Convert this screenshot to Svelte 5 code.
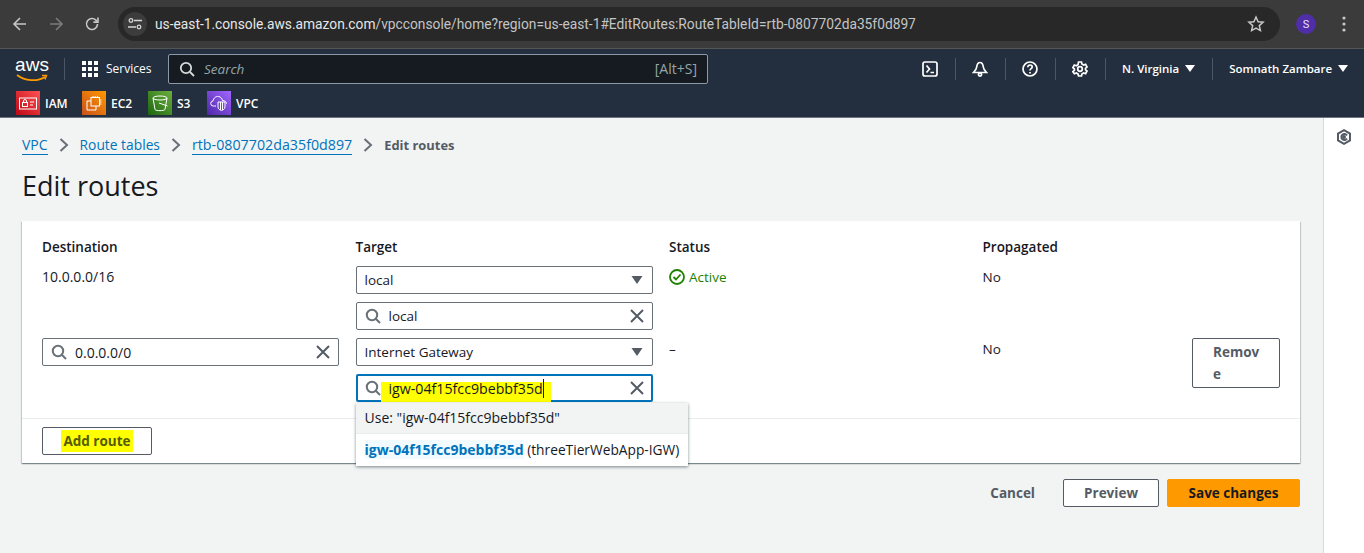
<script lang="ts">
    const favorites = [
        { name: "IAM", color: "iam" },
        { name: "EC2", color: "ec2" },
        { name: "S3", color: "s3" },
        { name: "VPC", color: "vpc" },
    ];
</script>

{#snippet searchIcon()}
    <svg class="ico" width="16" height="16" viewBox="0 0 16 16" fill="none" stroke="#687078" stroke-width="2">
        <circle cx="7" cy="7" r="5.2" />
        <path d="M11 11l4 4" />
    </svg>
{/snippet}

{#snippet clearIcon()}
    <svg class="clear" width="16" height="16" viewBox="0 0 16 16" fill="none" stroke="#545b64" stroke-width="2">
        <path d="M2 2l12 12M14 2L2 14" />
    </svg>
{/snippet}

{#snippet caret()}
    <svg class="caret" width="12" height="8" viewBox="0 0 12 8"><path d="M0.5 0h11L6 8z" fill="#545b64" /></svg>
{/snippet}

{#snippet crumbSep()}
    <svg width="10" height="16" viewBox="0 0 10 16" fill="none" stroke="#687078" stroke-width="2"><path d="M1.5 2l6.5 6-6.5 6" /></svg>
{/snippet}

<div class="browser">
    <div class="browser-nav">
        <svg width="16" height="16" viewBox="0 0 16 16" fill="none" stroke="#c7c7c7" stroke-width="1.6"><path d="M14 8H2.5M8 2L2 8l6 6" /></svg>
        <svg width="16" height="16" viewBox="0 0 16 16" fill="none" stroke="#7c7c7c" stroke-width="1.6"><path d="M2 8h11.5M8 2l6 6-6 6" /></svg>
        <svg width="16" height="16" viewBox="0 0 16 16" fill="none" stroke="#c7c7c7" stroke-width="1.6"><path d="M13.5 8a5.5 5.5 0 1 1-1.6-3.9L13.5 5.7" /><path d="M14 1.5v4.6H9.4" /></svg>
    </div>
    <div class="omnibox">
        <span class="tune">
            <svg width="14" height="12" viewBox="0 0 14 12" fill="none" stroke="#d5d5d5" stroke-width="1.3"><circle cx="3" cy="2.5" r="1.8" /><path d="M6 2.5h8M0 9h8" /><circle cx="11" cy="9" r="1.8" /></svg>
        </span>
        <span class="url">us-east-1.console.aws.amazon.com<span class="url-dim">/vpcconsole/home?region=us-east-1#EditRoutes:RouteTableId=rtb-0807702da35f0d897</span></span>
        <svg class="star" width="18" height="18" viewBox="0 0 18 18" fill="none" stroke="#c7c7c7" stroke-width="1.5"><path d="M9 2l2.1 4.7 5 .5-3.8 3.4 1.1 5L9 13l-4.4 2.6 1.1-5L1.9 7.2l5-.5z" /></svg>
    </div>
    <span class="avatar">S</span>
    <svg class="dots" width="4" height="16" viewBox="0 0 4 16" fill="#c7c7c7"><circle cx="2" cy="2" r="1.6" /><circle cx="2" cy="8" r="1.6" /><circle cx="2" cy="14" r="1.6" /></svg>
</div>

<header class="topnav">
    <div class="nav-main">
        <div class="logo">
            <span class="logo-text">aws</span>
            <svg width="32" height="8" viewBox="0 0 32 8" fill="none"><path d="M1 1c8 6 20 7 28 2" stroke="#ff9900" stroke-width="1.8" /><path d="M26 1.5l4.5 0-1.5 4" stroke="#ff9900" stroke-width="1.4" /></svg>
        </div>
        <span class="nav-div first"></span>
        <svg class="grid-ico" width="16" height="16" viewBox="0 0 16 16" fill="#fff">
            <rect width="4" height="4" /><rect x="6" width="4" height="4" /><rect x="12" width="4" height="4" />
            <rect y="6" width="4" height="4" /><rect x="6" y="6" width="4" height="4" /><rect x="12" y="6" width="4" height="4" />
            <rect y="12" width="4" height="4" /><rect x="6" y="12" width="4" height="4" /><rect x="12" y="12" width="4" height="4" />
        </svg>
        <span class="services">Services</span>
        <div class="nav-search">
            <svg width="16" height="16" viewBox="0 0 16 16" fill="none" stroke="#d5dbdb" stroke-width="1.8"><circle cx="7" cy="7" r="5.2" /><path d="M11 11l4 4" /></svg>
            <span class="placeholder">Search</span>
            <span class="shortcut">[Alt+S]</span>
        </div>
        <div class="nav-right">
            <svg width="16" height="16" viewBox="0 0 16 16" fill="none" stroke="#fff" stroke-width="1.7"><rect x="1" y="1" width="14" height="14" rx="2" /><path d="M4.5 4.5L7.5 8l-3 3.5M8.5 11.5h3.5" /></svg>
            <span class="nav-div"></span>
            <svg width="16" height="16" viewBox="0 0 16 16" fill="none" stroke="#fff" stroke-width="1.7"><path d="M8 1.5c-2.500 0-3 2-3.300 4.500-.2 2-1.200 3.500-3.200 5.500h13c-2-2-3-3.500-3.200-5.500C11 3.500 10.500 1.500 8 1.500z" /><circle cx="8" cy="13.500" r="1.600" /></svg>
            <span class="nav-div"></span>
            <svg width="16" height="16" viewBox="0 0 16 16" fill="none" stroke="#fff" stroke-width="1.7"><circle cx="8" cy="8" r="7" /><path d="M5.800 6.200c0-1.400 1-2.200 2.200-2.200s2.200.8 2.200 2c0 1.600-2.200 1.700-2.200 3.400" /><path d="M8 11v1.500" /></svg>
            <span class="nav-div"></span>
            <svg width="16" height="16" viewBox="0 0 16 16" fill="none" stroke="#fff" stroke-width="1.7"><circle cx="8" cy="8" r="2.300" /><path d="M6.500 1h3l.4 2 1.700 1 2-.7 1.400 2.700-1.500 1.300v1.400l1.500 1.300-1.400 2.700-2-.7-1.700 1-.4 2h-3l-.4-2-1.700-1-2 .7L.9 10.700l1.500-1.300V8l-1.500-1.300 1.400-2.700 2 .7 1.700-1z" /></svg>
            <span class="nav-div"></span>
            <span class="nav-text">N. Virginia</span>
            <svg class="nav-caret" width="10" height="7" viewBox="0 0 10 7"><path d="M0 0h10L5 7z" fill="#fff" /></svg>
            <span class="nav-div"></span>
            <span class="nav-text">Somnath Zambare</span>
            <svg class="nav-caret" width="10" height="7" viewBox="0 0 10 7"><path d="M0 0h10L5 7z" fill="#fff" /></svg>
        </div>
    </div>
    <div class="favorites">
        {#each favorites as fav}
            <div class="fav {fav.color}">
                <span class="chip">
                    {#if fav.name === "IAM"}
                        <svg width="18" height="14" viewBox="0 0 18 14" fill="none" stroke="#fff" stroke-width="1"><rect x=".5" y="2" width="17" height="11" /><rect x="3.500" y="6.500" width="5" height="4" /><path d="M4.500 6.500V5a1.500 1.500 0 0 1 3 0v1.500M11 6h4M11 9h3" /></svg>
                    {:else if fav.name === "EC2"}
                        <svg width="16" height="16" viewBox="0 0 16 16" fill="none" stroke="#fff" stroke-width="1"><rect x="5" y="2.500" width="8.500" height="8.500" /><path d="M5 6H1v9h9v-4M7 1v1.500M9.200 1v1.500M11.500 1v1.500M14 5h1.500M14 7h1.500M14 9h1.500" /></svg>
                    {:else if fav.name === "S3"}
                        <svg width="18" height="18" viewBox="0 0 18 18" fill="none" stroke="#fff" stroke-width="1"><ellipse cx="9" cy="4" rx="7" ry="2" /><path d="M2 4l2 11.500c1 1.500 9 1.500 10 0L16 4" /><path d="M8 9l8.500 3" /></svg>
                    {:else}
                        <svg width="18" height="16" viewBox="0 0 18 16" fill="none" stroke="#fff" stroke-width="1"><path d="M6 11H3.500a2.500 2.500 0 0 1-.5-5C3.500 3 6 1 8.500 1.500c2.300.4 3.700 2 4 4 2.500 0 4 1.500 4 3.200" /><path d="M8 7h7v5c0 2-2 3-3.500 3.500C10 15 8 14 8 12zM10.500 7v8M12.500 7v8" /></svg>
                    {/if}
                </span>
                <span class="fav-name">{fav.name}</span>
            </div>
        {/each}
    </div>
</header>

<div class="page">
    <main class="content">
        <nav class="crumbs">
            <a href="#vpc">VPC</a>
            {@render crumbSep()}
            <a class="tables" href="#tables">Route tables</a>
            {@render crumbSep()}
            <a class="rtb" href="#rtb">rtb-0807702da35f0d897</a>
            {@render crumbSep()}
            <span class="crumb-current">Edit routes</span>
        </nav>

        <h1>Edit routes</h1>

        <section class="card">
            <div class="routes">
                <div class="head">Destination</div>
                <div class="head">Target</div>
                <div class="head">Status</div>
                <div class="head">Propagated</div>
                <div></div>

                <div class="plain cidr">10.0.0.0/16</div>
                <div class="stack">
                    <div class="field"><span class="val">local</span>{@render caret()}</div>
                    <div class="field">{@render searchIcon()}<span class="val">local</span>{@render clearIcon()}</div>
                </div>
                <div class="plain active">
                    <svg width="16" height="16" viewBox="0 0 16 16" fill="none" stroke="#1d8102" stroke-width="1.800"><circle cx="8" cy="8" r="7" /><path d="M4.500 8l2.500 2.500 4.500-5" /></svg>
                    Active
                </div>
                <div class="plain">No</div>
                <div></div>

                <div class="field">{@render searchIcon()}<span class="val cidr">0.0.0.0/0</span>{@render clearIcon()}</div>
                <div class="stack target-cell">
                    <div class="field"><span class="val">Internet Gateway</span>{@render caret()}</div>
                    <div class="field focused">{@render searchIcon()}<span class="val"><mark class="hl">igw-04f15fcc9bebbf35d</mark></span>{@render clearIcon()}</div>
                    <ul class="dropdown">
                        <li class="use">Use: "igw-04f15fcc9bebbf35d"</li>
                        <li class="option"><b>igw-04f15fcc9bebbf35d</b> (threeTierWebApp-IGW)</li>
                    </ul>
                </div>
                <div class="plain">–</div>
                <div class="plain">No</div>
                <button class="btn remove">Remove</button>
            </div>
            <div class="card-foot">
                <button class="btn add"><mark class="hl-btn">Add route</mark></button>
            </div>
        </section>

        <div class="actions">
            <span class="cancel">Cancel</span>
            <button class="btn preview">Preview</button>
            <button class="btn save">Save changes</button>
        </div>
    </main>
    <aside class="side">
        <svg width="16" height="16" viewBox="0 0 16 16" fill="none" stroke="#545b64" stroke-width="2"><path d="M8 1.200l6 3.400v6.800l-6 3.400-6-3.400V4.600z" /><path d="M11 6.500A3 3 0 1 0 11 9.500" /><circle cx="8" cy="8" r="1" fill="#545b64" /></svg>
    </aside>
</div>

<style>
    :global(body) {
        margin: 0;
        background: #f2f3f3;
        font-family: "Open Sans", "Noto Sans", sans-serif;
        overflow: hidden;
    }

    .browser {
        height: 49px;
        box-sizing: border-box;
        background: #3b3b3b;
        border-bottom: 1px solid #555;
        display: flex;
        align-items: center;
        padding-left: 12px;
        font-family: Roboto, sans-serif;
    }

    .browser-nav {
        display: flex;
        gap: 20px;
        align-items: center;
        margin-right: 18px;
    }

    .omnibox {
        width: 1162px;
        height: 34px;
        background: #282828;
        border-radius: 17px;
        display: flex;
        align-items: center;
        padding-left: 5px;
        box-sizing: border-box;
    }

    .tune {
        width: 24px;
        height: 24px;
        border-radius: 50%;
        background: #3c3c3c;
        display: flex;
        align-items: center;
        justify-content: center;
        margin-right: 8px;
    }

    .url {
        color: #e6e6e6;
        font-size: 13.77px;
        flex: 1;
        white-space: nowrap;
    }

    .url-dim {
        color: #c4c4c4;
    }

    .star {
        margin-right: 15px;
    }

    .avatar {
        width: 20px;
        height: 20px;
        border-radius: 50%;
        background: #4f2ea8;
        color: #e8e0ff;
        font-size: 11px;
        display: flex;
        align-items: center;
        justify-content: center;
        margin-left: 16px;
    }

    .dots {
        margin-left: 26px;
    }

    .topnav {
        background: #232f3e;
        height: 68px;
        border-bottom: 1px solid #6b7480;
        color: #fff;
    }

    .nav-main {
        height: 39px;
        display: flex;
        align-items: center;
        padding-left: 16px;
    }

    .logo {
        width: 32px;
        display: flex;
        flex-direction: column;
        align-items: center;
        height: 26px;
    }

    .logo-text {
        font-family: "Liberation Sans", sans-serif;
        font-size: 19px;
        line-height: 18px;
        color: #fff;
    }

    .nav-div {
        width: 1px;
        height: 22px;
        background: #4b5563;
    }

    .nav-div.first {
        margin: 0 17px 0 16px;
    }

    .services {
        font-size: 12px;
        font-weight: 500;
        margin-left: 8px;
        width: 62px;
    }

    .nav-search {
        width: 540px;
        height: 30px;
        box-sizing: border-box;
        background: #161b22;
        border: 1px solid #8d99a8;
        border-radius: 2px;
        display: flex;
        align-items: center;
        padding: 0 10px;
        font-size: 13.5px;
    }

    .placeholder {
        margin-left: 9px;
        font-style: italic;
        color: #95a5a6;
        flex: 1;
    }

    .shortcut {
        color: #95a5a6;
        font-size: 14px;
    }

    .nav-right {
        display: flex;
        align-items: center;
        margin-left: 214px;
    }

    .nav-right > svg {
        flex: none;
    }

    .nav-right > .nav-div {
        margin: 0 16.5px;
    }

    .nav-text {
        font-size: 11.5px;
        font-weight: 600;
        white-space: nowrap;
    }

    .nav-caret {
        margin-left: 6px;
    }

    .favorites {
        display: flex;
        padding-left: 16px;
        height: 28px;
        align-items: center;
        margin-top: 1px;
    }

    .fav {
        display: flex;
        align-items: center;
        gap: 5px;
        font-size: 12px;
        font-weight: 600;
    }

    .fav.iam { width: 66px; }
    .fav.ec2 { width: 66px; }
    .fav.s3 { width: 59px; }

    .chip {
        width: 24px;
        height: 24px;
        display: flex;
        align-items: center;
        justify-content: center;
    }

    .iam .chip { background: linear-gradient(45deg, #bd0816, #ff5252); }
    .ec2 .chip { background: linear-gradient(45deg, #c8511b, #ff9900); }
    .s3 .chip { background: linear-gradient(45deg, #1b660f, #6cae3e); }
    .vpc .chip { background: linear-gradient(45deg, #4d27a8, #a166ff); }

    .page {
        display: flex;
        height: 435px;
    }

    .content {
        width: 1323px;
        box-sizing: border-box;
        padding: 0 23px 0 22px;
    }

    .side {
        flex: 1;
        background: #fff;
        border-left: 1px solid #d5dbdb;
        display: flex;
        justify-content: center;
        padding-top: 11px;
        box-sizing: border-box;
    }

    .crumbs {
        display: flex;
        align-items: center;
        gap: 11px;
        height: 20px;
        margin-top: 17px;
        font-size: 14px;
    }

    .crumbs a {
        color: #0073bb;
        text-decoration: none;
        border-bottom: 1px solid #0073bb;
        line-height: 18px;
    }

    .crumbs a.tables {
        font-size: 13.8px;
    }

    .crumbs a.rtb {
        font-size: 14.25px;
    }

    .crumb-current {
        color: #545b64;
        font-weight: 700;
        font-size: 12.9px;
    }

    h1 {
        font-size: 27px;
        font-weight: 400;
        color: #16191f;
        margin: 12px 0 0;
        line-height: 38px;
    }

    .card {
        margin-top: 16px;
        background: #fff;
        box-shadow: 0 1px 1px 0 rgba(0, 28, 36, 0.3), 1px 1px 1px 0 rgba(0, 28, 36, 0.15), -1px 1px 1px 0 rgba(0, 28, 36, 0.15);
    }

    .routes {
        display: grid;
        grid-template-columns: 297px 297px 297px 193px 88px;
        column-gap: 16.5px;
        row-gap: 8px;
        padding: 16px 20px 16px;
        border-bottom: 1px solid #eaeded;
        font-size: 14px;
        color: #16191f;
        align-items: start;
    }

    .head {
        font-weight: 600;
        line-height: 20px;
        margin-bottom: 1px;
        font-size: 13.5px;
    }

    .plain {
        line-height: 22px;
        font-size: 13.5px;
    }

    .plain.cidr, .val.cidr {
        font-size: 14px;
    }

    .active {
        color: #1d8102;
        display: flex;
        align-items: center;
        gap: 4px;
    }

    .stack {
        display: flex;
        flex-direction: column;
        gap: 8px;
    }

    .target-cell {
        position: relative;
    }

    .field {
        height: 28px;
        box-sizing: border-box;
        border: 1px solid #687078;
        border-radius: 2px;
        display: flex;
        align-items: center;
        padding: 0 7px 0 8px;
        background: #fff;
        font-size: 13.5px;
    }

    .field .ico {
        margin-right: 8px;
        flex: none;
    }

    .field .val {
        flex: 1;
        white-space: nowrap;
    }

    .clear {
        flex: none;
    }

    .caret {
        flex: none;
        margin-right: 2px;
    }

    .focused {
        border: 2px solid #0073bb;
        padding: 0 6px 0 7px;
    }

    .hl {
        position: relative;
        z-index: 0;
        background: none;
        color: #16191f;
        font-size: 14.2px;
        border-right: 1px solid #16191f;
    }

    .hl::before {
        content: "";
        position: absolute;
        z-index: -1;
        left: -8px;
        right: -8px;
        top: 3px;
        bottom: -4px;
        background: #ffff00;
    }

    .dropdown {
        position: absolute;
        left: 0;
        top: 65px;
        width: 332px;
        margin: 0;
        padding: 0;
        list-style: none;
        background: #fff;
        box-shadow: 0 1px 3px rgba(0, 28, 36, 0.5);
        font-size: 14px;
        z-index: 2;
        white-space: nowrap;
    }

    .use {
        background: #f2f3f3;
        height: 30px;
        line-height: 30px;
        padding-left: 9px;
        border-bottom: 1px solid #eaeded;
    }

    .option {
        height: 32px;
        line-height: 32px;
        padding-left: 9px;
        font-size: 13.75px;
    }

    .option b {
        color: #0073bb;
        background: #f1faff;
        font-weight: 700;
        font-size: 14px;
    }

    .btn {
        font-family: inherit;
        font-size: 13.5px;
        font-weight: 700;
        border-radius: 2px;
        border: 1px solid #545b64;
        background: #fff;
        color: #545b64;
        box-sizing: border-box;
    }

    .remove {
        width: 88px;
        height: 50px;
        padding: 0 18px 0 20px;
        text-align: left;
        word-break: break-all;
        line-height: 22px;
    }

    .card-foot {
        padding: 8px 20px;
    }

    .add {
        width: 110px;
        height: 28px;
        padding: 0;
        display: flex;
        align-items: center;
        justify-content: center;
    }

    .hl-btn {
        background: #ffff00;
        color: #545b00;
        padding: 2px 2px;
    }

    .actions {
        display: flex;
        justify-content: flex-end;
        align-items: center;
        margin-top: 16px;
    }

    .cancel {
        font-size: 13.5px;
        font-weight: 700;
        color: #545b64;
        margin-right: 28px;
    }

    .preview {
        width: 96px;
        height: 28px;
        margin-right: 8px;
    }

    .save {
        width: 133px;
        height: 28px;
        background: #ff9900;
        border-color: #ff9900;
        color: #16191f;
    }
</style>
